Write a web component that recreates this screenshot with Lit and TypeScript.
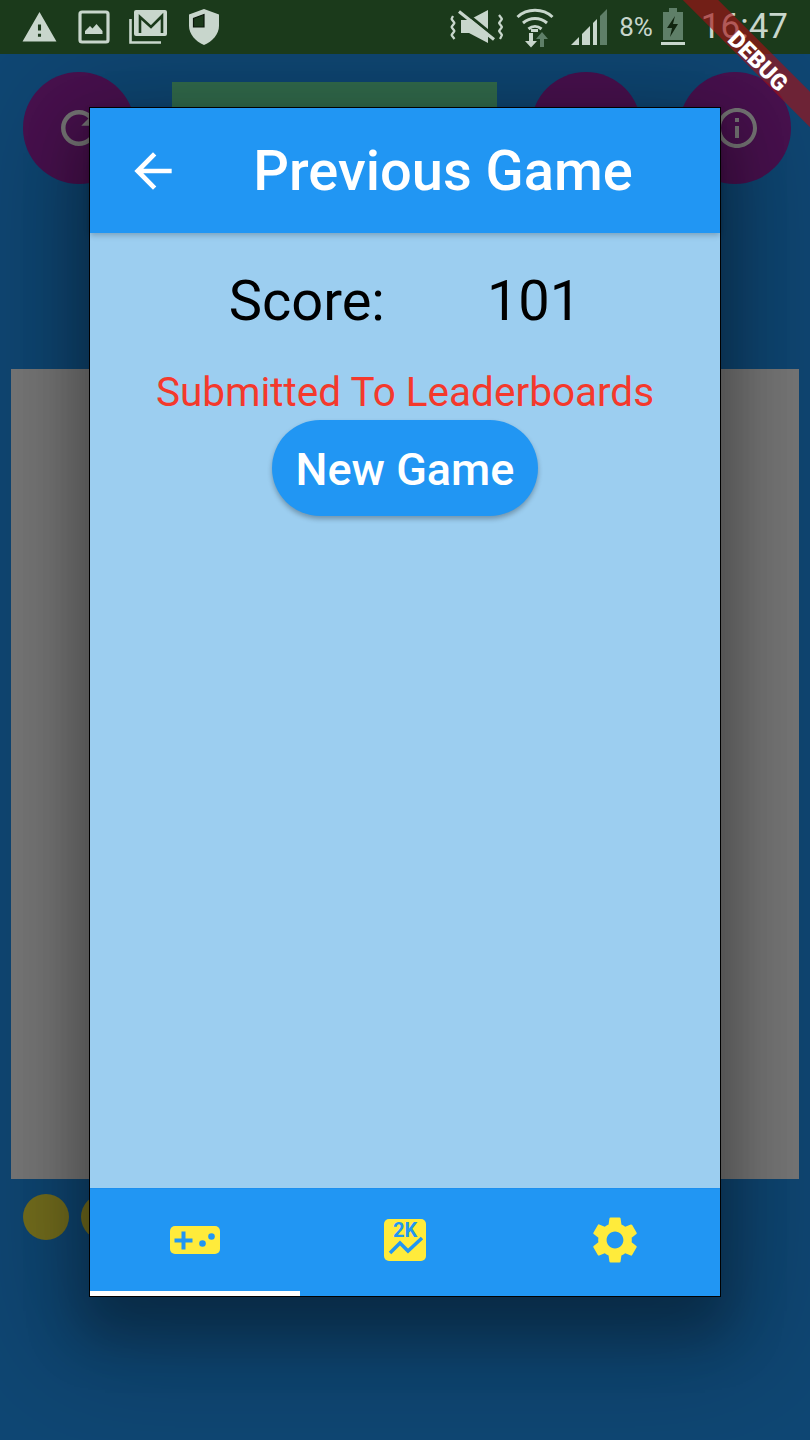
import { LitElement, html, css, svg } from "lit";
import { customElement } from "lit/decorators.js";

const ic = (size: number, vb: string, body: unknown, cls = "") =>
  html`<svg class=${cls} width=${size} height=${size} viewBox=${vb} aria-hidden="true">${body}</svg>`;

const P = {
  warning: "M1 21h22L12 2 1 21zm12-3h-2v-2h2v2zm0-4h-2v-4h2v4z",
  back: "M20 11H7.83l5.59-5.59L12 4l-8 8 8 8 1.41-1.41L7.83 13H20v-2z",
  refresh:
    "M17.65 6.35C16.2 4.9 14.21 4 12 4c-4.42 0-7.99 3.58-7.99 8s3.57 8 7.99 8c3.73 0 6.84-2.55 7.73-6h-2.08c-.82 2.33-3.04 4-5.65 4-3.31 0-6-2.69-6-6s2.69-6 6-6c1.66 0 3.14.69 4.22 1.78L13 11h7V4l-2.35 2.35z",
  info: "M11 7h2v2h-2zm0 4h2v6h-2zm1-9C6.48 2 2 6.48 2 12s4.48 10 10 10 10-4.48 10-10S17.52 2 12 2zm0 18c-4.41 0-8-3.59-8-8s3.59-8 8-8 8 3.59 8 8-3.59 8-8 8z",
  gear: "M19.14 12.94c.04-.3.06-.61.06-.94 0-.32-.02-.64-.07-.94l2.03-1.58c.18-.14.23-.41.12-.61l-1.92-3.32c-.12-.22-.37-.29-.59-.22l-2.39.96c-.5-.38-1.03-.7-1.62-.94l-.36-2.54c-.04-.24-.24-.41-.48-.41h-3.84c-.24 0-.43.17-.47.41l-.36 2.54c-.59.24-1.13.57-1.62.94l-2.39-.96c-.22-.08-.47 0-.59.22L2.74 8.87c-.12.21-.08.47.12.61l2.03 1.58c-.05.3-.09.63-.09.94s.02.64.07.94l-2.03 1.58c-.18.14-.23.41-.12.61l1.92 3.32c.12.22.37.29.59.22l2.39-.96c.5.38 1.03.7 1.62.94l.36 2.54c.05.24.24.41.48.41h3.84c.24 0 .44-.17.47-.41l.36-2.54c.59-.24 1.13-.56 1.62-.94l2.39.96c.22.08.47 0 .59-.22l1.92-3.32c.12-.22.07-.47-.12-.61l-2.01-1.58zM12 15.6c-1.98 0-3.6-1.62-3.6-3.6s1.62-3.6 3.6-3.6 3.6 1.62 3.6 3.6-1.62 3.6-3.6 3.6z",
};

const SB = "#c8d6cc";
const DARK = "#1b3a1b";

@customElement("app-root")
export class AppRoot extends LitElement {
  static styles = css`
    :host { display: block; width: 810px; height: 1440px; font-family: Roboto, "Liberation Sans", sans-serif; }
    * { box-sizing: border-box; }
    .page { position: relative; width: 810px; height: 1440px; overflow: hidden; background: #0f4774; display: flex; flex-direction: column; }

    .status { height: 54px; flex: none; background: #1b3a1b; display: flex; align-items: center; color: #c8d6cc; padding-left: 21px; position: relative; z-index: 1; }
    .status svg { display: block; flex: none; }
    .left { display: flex; align-items: center; }
    .right { margin-left: auto; display: flex; align-items: center; padding-right: 22px; }
    .pct { font-size: 26px; margin: 0 8px 0 11px; line-height: 54px; }
    .time { font-size: 35px; margin-left: 16px; line-height: 54px; }

    .under { flex: 1; display: flex; flex-direction: column; }
    .toprow { display: flex; align-items: flex-start; padding: 18px 0 0 23px; height: 130px; }
    .circle { width: 112px; height: 112px; border-radius: 50%; background: #4a1150; display: flex; align-items: center; justify-content: center; flex: none; }
    .circle svg { fill: #7a7a7a; display: block; }
    .bar { width: 325px; height: 60px; margin: 10px 34px 0 37px; background: #336e4e; flex: none; }
    .c3 { width: 110px; height: 110px; }
    .c4 { margin-left: 38px; padding-left: 4px; }
    .board { margin: 185px 11px 0; height: 810px; background: #7a7a7a; }
    .dots { display: flex; gap: 12px; padding: 15px 0 0 23px; }
    .dot { width: 46px; height: 46px; border-radius: 50%; background: #76701e; }

    .modal { position: absolute; left: 90px; top: 108px; width: 630px; height: 1188px; display: flex; flex-direction: column; background: #9ccef0;
      outline: 1px solid #000;
      box-shadow: 0 30px 50px 10px rgba(0,0,0,.26), 0 24px 120px 40px rgba(0,0,0,.22); }
    .appbar { height: 125px; flex: none; background: #2196f3; display: flex; align-items: center; color: #fff; box-shadow: 0 2px 6px rgba(0,0,0,.24); position: relative; }
    .appbar svg { fill: #fff; display: block; flex: none; margin-left: 35px; }
    .title { flex: 1; text-align: center; font-size: 56px; font-weight: 500; padding-right: 15px; }
    .content { flex: 1; display: flex; flex-direction: column; align-items: center; }
    .score { display: flex; gap: 102px; font-size: 56px; color: #000; line-height: 60px; margin-top: 38px; }
    .sub { color: #f4392c; font-size: 40.500px; line-height: 44px; margin-top: 39px; }
    .btn { width: 266px; height: 96px; border-radius: 48px; border: none; background: #2196f3; color: #fff; font: 500 45px Roboto, sans-serif; margin-top: 6px; box-shadow: 0 3px 5px rgba(0,0,0,.28); padding: 2px 0 0; }
    .tabs { height: 108px; flex: none; background: #2196f3; display: flex; border-top: 1px solid #1b8ff0; }
    .tab { flex: 1; display: flex; align-items: center; justify-content: center; position: relative; padding-bottom: 5px; }
    .tab svg { display: block; }
    .tab.on::after { content: ""; position: absolute; left: 0; right: 0; bottom: 0; height: 5px; background: #fff; }
    .gear { fill: #ffeb3b; }
    .chart-label { font: 700 20px Roboto, sans-serif; fill: #2196f3; }

    .ribbon { position: absolute; left: 607px; top: 44px; width: 300px; height: 25px; background: rgba(165,16,20,.63); transform: rotate(45deg); color: #fff; font-size: 23px; font-weight: 900; display: flex; align-items: center; justify-content: center; padding: 5px 0 0 8px; z-index: 3; }
  `;

  private statusLeft() {
    return html`<div class="left">
      ${ic(37, "0 0 24 24", svg`<path fill=${SB} fill-rule="evenodd" d=${P.warning}/>`)}
      <span style="width:20px"></span>
      <svg width="32" height="34" viewBox="0 0 32 34"><rect x="2" y="2" width="28" height="30" rx="2" fill="none" stroke=${SB} stroke-width="3.2"/><path fill=${SB} d="M7 24v-3l5-5 2.500 2.500 4-4.500 6 7v3z"/></svg>
      <span style="width:19px"></span>
      <svg width="40" height="34" viewBox="0 0 40 34"><path fill="none" stroke=${SB} stroke-width="2.600" d="M1.500 9v23.500H32"/><rect x="5" y="0" width="33" height="26" rx="2" fill=${SB}/><path fill="none" stroke=${DARK} stroke-width="2.600" d="M11 23V7l11 10L33 6v17"/></svg>
      <span style="width:19px"></span>
      <svg width="32" height="36" viewBox="0 0 32 36"><path fill=${SB} d="M16 0 1 5.500V17c0 8 6.500 15.500 15 19 8.500-3.500 15-11 15-19V5.500z"/><path fill=${DARK} stroke="#0a160a" stroke-width="1.200" d="M16 5.500 5.500 9.500V18H16z"/></svg>
    </div>`;
  }

  private statusRight() {
    return html`<div class="right">
      <svg width="54" height="36" viewBox="0 0 54 36"><g fill="none" stroke=${SB} stroke-width="2.200" stroke-linejoin="bevel"><path d="M3 7l-1.500 3 3 4-3 4 3 4-3 4 3 4"/><path d="M49 6l3 4-3 4 3 4-3 4 3 4-2 4"/></g><path fill=${SB} d="M11 11h8L38 1v33L19 24h-8z"/><path stroke=${DARK} stroke-width="3" d="M11 0l33 27"/><path stroke=${SB} stroke-width="3.200" d="M9 2.500l35 28"/></svg>
      <span style="width:12px"></span>
      <svg width="38" height="42" viewBox="0 0 38 42"><g fill="none" stroke=${SB} stroke-width="3"><path d="M1.500 11C11 2 27 2 36.500 11"/><path d="M7 17c7-6 17-6 24 0"/><path d="M12.500 23c4-3.500 9-3.500 13 0"/></g><path fill=${SB} d="M15 23h7v3h-7z"/><path fill=${SB} d="M13 27h4v8h4l-6 6.500-6-6.500h4z"/><path fill="#5f7f68" d="M24 41v-8h-4l6-7 6 7h-4v8z"/></svg>
      <span style="width:17px"></span>
      <svg width="37" height="37" viewBox="0 0 37 37"><path fill=${SB} d="M0 36l8-8v8zM11 36V25l8-8v19zM22 36V14l4-4v26z"/><path fill="#5f7f68" d="M29 36V7l7-7v36z"/></svg>
      <span class="pct">8%</span>
      <svg width="24" height="38" viewBox="0 0 24 38"><path fill="#5f7f68" d="M8 0h8v4h6v28H2V4h6z"/><path fill="#10240f" d="M14 8 6 20h5l-2 9 8-13h-5z"/><path fill=${SB} d="M0 34h24v3H0z"/></svg>
      <span class="time">16:47</span>
    </div>`;
  }

  render() {
    return html`<div class="page">
      <div class="status">${this.statusLeft()}${this.statusRight()}</div>
      <div class="under">
        <div class="toprow">
          <div class="circle">${ic(54, "0 0 24 24", svg`<path d=${P.refresh}/>`)}</div>
          <div class="bar"></div>
          <div class="circle c3"></div>
          <div class="circle c4">${ic(48, "0 0 24 24", svg`<path d=${P.info}/>`)}</div>
        </div>
        <div class="board"></div>
        <div class="dots"><div class="dot"></div><div class="dot"></div></div>
      </div>

      <div class="modal">
        <div class="appbar">
          ${ic(56, "0 0 24 24", svg`<path d=${P.back}/>`)}
          <div class="title">Previous Game</div>
        </div>
        <div class="content">
          <div class="score"><span>Score:</span><span>101</span></div>
          <div class="sub">Submitted To Leaderboards</div>
          <button class="btn">New Game</button>
        </div>
        <div class="tabs">
          <div class="tab on">
            <svg width="50" height="28" viewBox="0 0 50 28"><rect width="50" height="28" rx="5" fill="#ffeb3b"/><path fill="#2196f3" d="M4.500 12.500h7v-7h4v7h7v4h-7v7h-4v-7h-7z"/><circle cx="32.500" cy="17.500" r="3.300" fill="#2196f3"/><circle cx="41.500" cy="10.500" r="3.300" fill="#2196f3"/></svg>
          </div>
          <div class="tab">
            <svg width="42" height="42" viewBox="0 0 42 42"><rect width="42" height="42" rx="5" fill="#ffeb3b"/><text class="chart-label" x="9" y="18">2K</text><path fill="none" stroke="#2196f3" stroke-width="3.500" d="M6 34l10-10 8 8 14-13"/></svg>
          </div>
          <div class="tab">${ic(56, "0 0 24 24", svg`<path class="gear" d=${P.gear}/>`)}</div>
        </div>
      </div>

      <div class="ribbon">DEBUG</div>
    </div>`;
  }
}
